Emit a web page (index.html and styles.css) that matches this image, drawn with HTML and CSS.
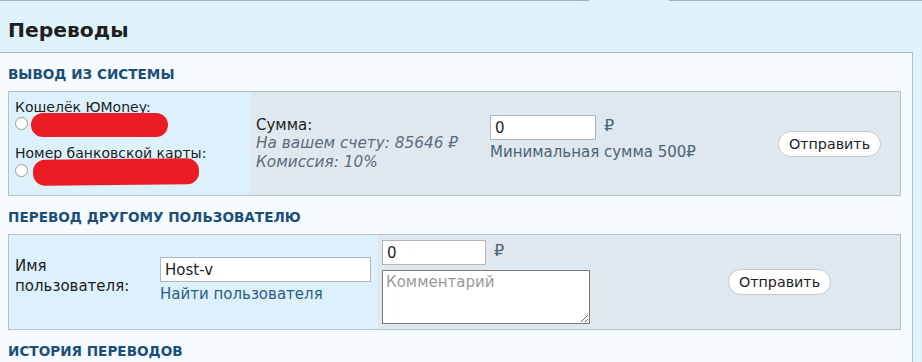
FILE: index.html
```html
<!DOCTYPE html>
<html lang="ru">
<head>
    <meta charset="UTF-8">
    <title>Переводы</title>
    <link rel="stylesheet" href="styles.css">
</head>
<body>
    <div class="tab-line">
        <span class="tab-line-part tab-line-left"></span>
        <span class="tab-line-gap"></span>
        <span class="tab-line-part tab-line-right"></span>
    </div>

    <h1 class="page-title">Переводы</h1>

    <div class="panel">
        <h3 class="section-title">Вывод из системы</h3>
        <div class="form-box">
            <div class="cell cell-accent cell-wallets">
                <div class="wallet-label">Кошелёк ЮMoney:</div>
                <label class="wallet-row">
                    <input type="radio" name="wallet" class="radio">
                    <span class="hidden-value hidden-value-short"></span>
                </label>
                <div class="wallet-label wallet-label-second">Номер банковской карты:</div>
                <label class="wallet-row wallet-row-second">
                    <input type="radio" name="wallet" class="radio">
                    <span class="hidden-value hidden-value-long"></span>
                </label>
            </div>
            <div class="cell cell-info">
                <div>Сумма:</div>
                <div class="muted">На вашем счету: 85646 ₽</div>
                <div class="muted">Комиссия: 10%</div>
            </div>
            <div class="cell cell-amount">
                <div class="amount-row">
                    <input type="text" class="field field-amount" value="0">
                    <span class="currency">₽</span>
                </div>
                <div class="hint">Минимальная сумма 500₽</div>
            </div>
            <div class="cell cell-action">
                <button class="send-button">Отправить</button>
            </div>
        </div>

        <h3 class="section-title">Перевод другому пользователю</h3>
        <div class="form-box">
            <div class="cell cell-accent cell-user">
                <div class="user-label">Имя<br>пользователя:</div>
                <div class="user-field">
                    <input type="text" class="field field-user" value="Host-v">
                    <a href="#" class="find-link">Найти пользователя</a>
                </div>
            </div>
            <div class="cell cell-transfer">
                <div class="amount-row">
                    <input type="text" class="field field-amount-small" value="0">
                    <span class="currency">₽</span>
                </div>
                <textarea class="comment" placeholder="Комментарий"></textarea>
            </div>
            <div class="cell cell-action">
                <button class="send-button">Отправить</button>
            </div>
        </div>

        <h3 class="section-title">История переводов</h3>
    </div>
</body>
</html>
```

FILE: styles.css
```css
body {
    margin: 0;
    overflow: hidden;
    background-color: #dff3fc;
    font-family: "DejaVu Sans", Verdana, sans-serif;
    color: #1e1e1e;
}

/* --- tab strip edge --- */
.tab-line {
    display: flex;
    height: 1px;
}
.tab-line-part {
    border-top: 1px solid #a6b4be;
}
.tab-line-left {
    width: 589px;
}
.tab-line-gap {
    width: 80px;
}
.tab-line-right {
    flex-grow: 1;
}

.page-title {
    margin: 0;
    padding: 17px 8px 10px;
    font-size: 20.3px;
    line-height: 24px;
    font-weight: bold;
    color: #1e1e1e;
}

/* --- main panel --- */
.panel {
    width: 913px;
    box-sizing: border-box;
    background-color: #f5fbfe;
    border-top: 1px solid #a8b6c0;
    border-right: 1px solid #b4c0c8;
    padding: 0 11px 20px 8px;
}
.section-title {
    margin: 0 0 9px;
    font-size: 13.6px;
    line-height: 16px;
    font-weight: bold;
    text-transform: uppercase;
    color: #1b4f7a;
}
.section-title:first-child {
    margin-top: 13px;
}
.form-box {
    display: flex;
    border: 1px solid #b6c2ca;
    background-color: #dfe8ef;
    margin-bottom: 13px;
}
.cell {
    box-sizing: border-box;
}
.cell-accent {
    background-color: #dcf1fb;
}

/* --- withdrawal --- */
.cell-wallets {
    width: 241px;
    padding: 7px 6px 10px 6px;
    font-size: 14px;
    line-height: 16px;
}
.wallet-row {
    display: flex;
    align-items: center;
    height: 24px;
    margin-top: -2px;
}
.wallet-row-second {
    height: 26px;
}
.wallet-label-second {
    margin-top: 8px;
}
.radio {
    -webkit-appearance: none;
    appearance: none;
    width: 13px;
    height: 13px;
    margin: -4px 3px 0 0;
    border: 1px solid #9a9a9a;
    border-radius: 50%;
    background: #fff;
    flex-shrink: 0;
}
.hidden-value {
    display: block;
    background-color: #ec1c24;
    border-radius: 12px;
    height: 100%;
}
.hidden-value-short {
    width: 137px;
}
.hidden-value-long {
    width: 166px;
    margin-left: 2px;
    transform: rotate(-0.6deg);
}
.cell-info {
    width: 235px;
    padding-left: 6px;
    display: flex;
    flex-direction: column;
    justify-content: center;
    font-size: 15px;
    line-height: 18.5px;
}
.muted {
    font-style: italic;
    font-size: 15.3px;
    color: #5d6c7b;
}
.cell-amount {
    width: 274px;
    padding: 23px 0 0 5px;
    font-size: 15px;
}
.amount-row {
    display: flex;
    align-items: center;
    gap: 8px;
    height: 25px;
}
.currency {
    font-size: 16px;
    color: #4d6273;
    margin-top: -4px;
}
.field {
    box-sizing: border-box;
    height: 25px;
    margin: 0;
    padding: 0 4px;
    border: 1px solid #b1b5b8;
    background: #fff;
    font-family: "DejaVu Sans", Verdana, sans-serif;
    font-size: 15px;
    color: #1e1e1e;
    outline: none;
}
.field-amount {
    width: 106px;
}
.hint {
    margin-top: 3px;
    line-height: 19px;
    color: #4a6377;
}
.cell-action {
    flex-grow: 1;
    display: flex;
    align-items: center;
    justify-content: center;
}
.send-button {
    box-sizing: border-box;
    height: 26px;
    padding: 0 10px;
    border: 1px solid #c4c8cb;
    border-radius: 13px;
    background: #fff;
    font-family: "DejaVu Sans", Verdana, sans-serif;
    font-size: 14.3px;
    color: #1e1e1e;
    cursor: pointer;
}

/* --- transfer to user --- */
.cell-user {
    width: 369px;
    display: flex;
    padding: 21px 6px 0 6px;
    font-size: 15px;
}
.user-label {
    width: 145px;
    line-height: 20px;
}
.user-field {
    display: flex;
    flex-direction: column;
    padding-top: 1px;
}
.field-user {
    width: 211px;
}
.find-link {
    margin-top: 3px;
    line-height: 19px;
    color: #2d5d84;
    text-decoration: none;
}
.cell-transfer {
    width: 281px;
    padding: 5px 0 5px 4px;
    font-size: 15px;
}
.field-amount-small {
    width: 104px;
}
.comment {
    display: block;
    box-sizing: border-box;
    width: 208px;
    height: 54px;
    margin-top: 5px;
    padding: 2px 3px;
    border: 1px solid #7a7a7a;
    font-family: "DejaVu Sans", Verdana, sans-serif;
    font-size: 15px;
    outline: none;
}
.comment::placeholder {
    color: #9a9a9a;
}
```
